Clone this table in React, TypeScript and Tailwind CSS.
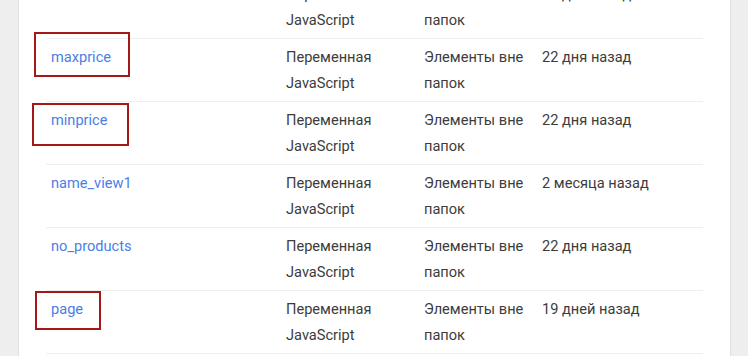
import React from "react";

type Row = { name: string; date: string; box?: { l: number; t: number; w: number; h: number } };

const rows: Row[] = [
  { name: "total", date: "22 дня назад" },
  { name: "maxprice", date: "22 дня назад", box: { l: -12, t: -7, w: 96, h: 45 } },
  { name: "minprice", date: "22 дня назад", box: { l: -14, t: 1, w: 97, h: 43 } },
  { name: "name_view1", date: "2 месяца назад" },
  { name: "no_products", date: "22 дня назад" },
  { name: "page", date: "19 дней назад", box: { l: -11, t: 0, w: 66, h: 39 } },
  { name: "price_from", date: "22 дня назад" },
];

export default function App() {
  return (
    <div
      className="w-[748px] h-[356px] overflow-hidden bg-[#eeeeee] flex"
      style={{ fontFamily: "Roboto, 'Liberation Sans', sans-serif" }}
    >
      <div className="ml-[18px] w-[713px] h-full bg-white border-x border-[#e0e0e0]">
        <div className="mx-[27px] -mt-[24px]">
          {rows.map((r, i) => (
            <div
              key={i}
              className="relative grid grid-cols-[240px_138px_118px_1fr] border-b border-[#eeeeee] py-[5px] text-[14.6px] leading-[26px] text-[#3c3c3c]"
            >
              <div className="pl-[5px] text-[#4a80e6]">{r.name}</div>
              <div className="pr-[12px]">Переменная JavaScript</div>
              <div className="pr-[4px]">Элементы вне папок</div>
              <div>{r.date}</div>
              {r.box && (
                <div
                  className="absolute border-2 border-[#a31818]"
                  style={{ left: r.box.l, top: r.box.t, width: r.box.w, height: r.box.h }}
                />
              )}
            </div>
          ))}
        </div>
      </div>
    </div>
  );
}
